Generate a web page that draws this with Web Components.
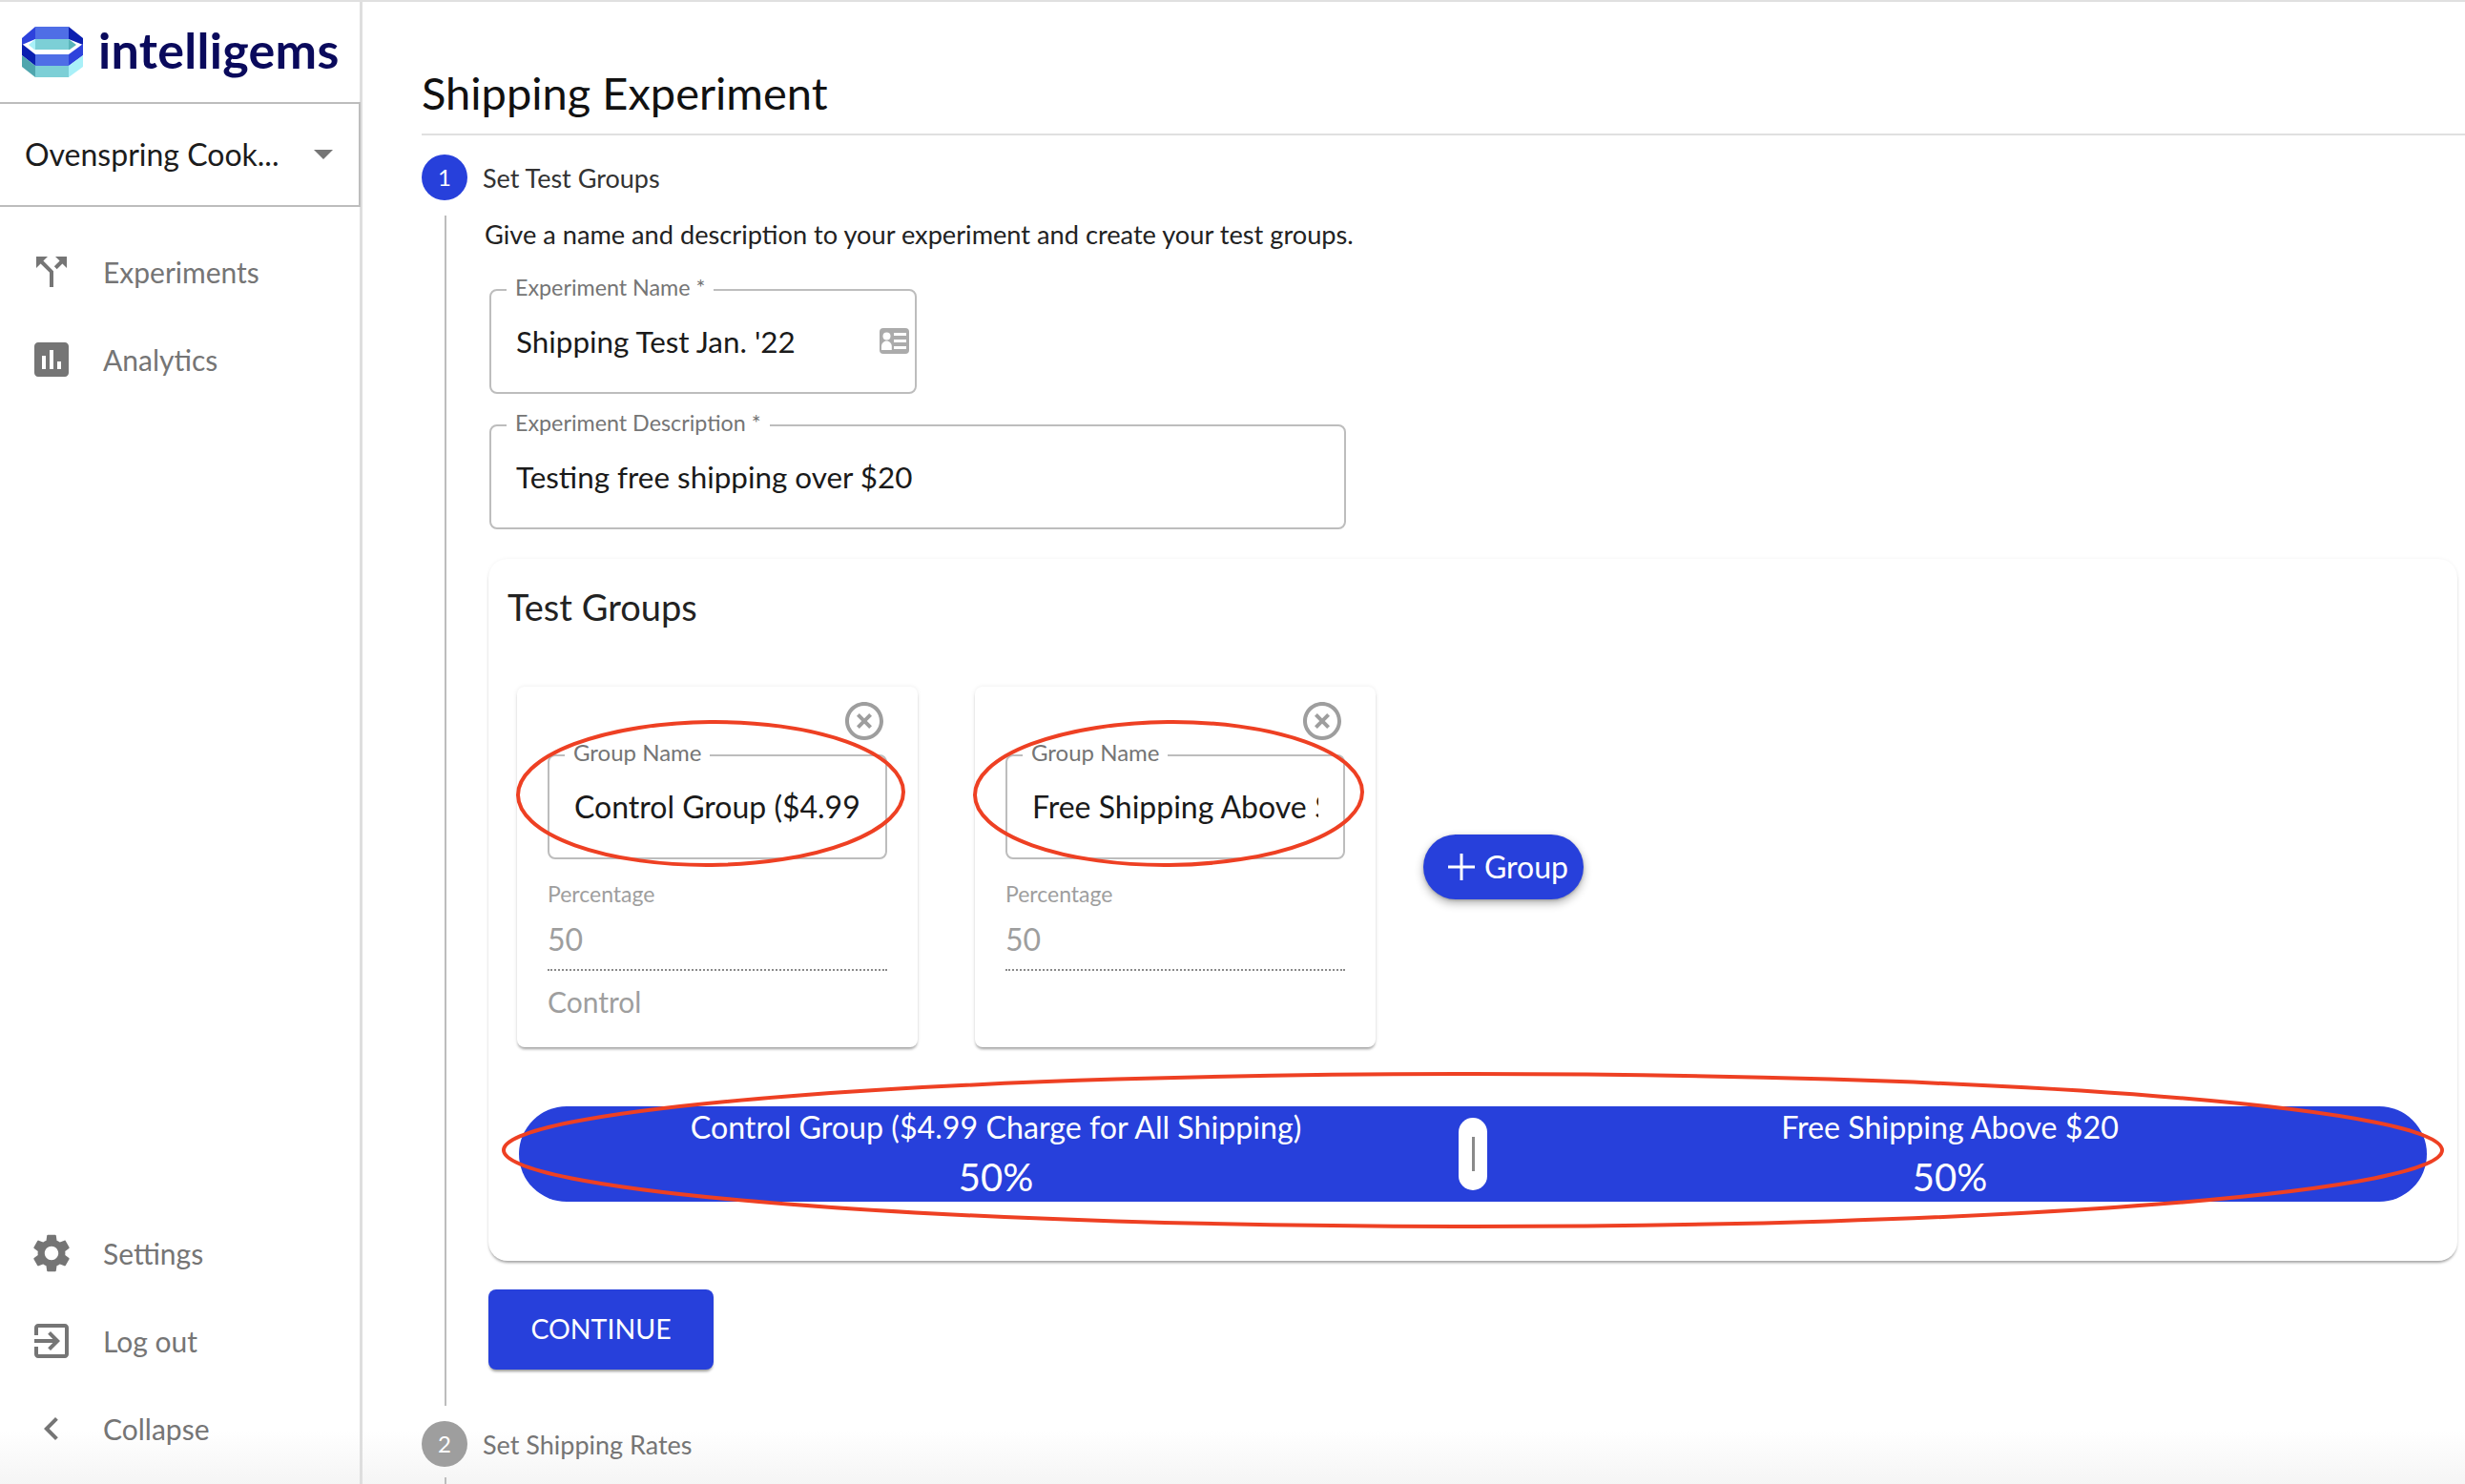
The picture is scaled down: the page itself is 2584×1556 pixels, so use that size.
<!DOCTYPE html>
<html lang="en">
<head>
<meta charset="utf-8">
<title>Shipping Experiment</title>
<style>
  html, body { margin: 0; padding: 0; background: #fff; }
  body { font-family: Lato, "Liberation Sans", sans-serif; color: #1a1a1a; }
</style>
</head>
<body>
<app-shell>
  <side-bar slot="side">
    <nav-item slot="top" label="Experiments" icon="M14 4l2.29 2.29-2.88 2.88 1.42 1.42 2.88-2.88L20 10V4zm-4 0H4v6l2.29-2.29 4.71 4.7V20h2v-8.41l-5.29-5.3z"></nav-item>
    <nav-item slot="top" label="Analytics" icon="M19 3H5c-1.1 0-2 .9-2 2v14c0 1.1.9 2 2 2h14c1.1 0 2-.9 2-2V5c0-1.1-.9-2-2-2zM9 17H7v-7h2v7zm4 0h-2V7h2v10zm4 0h-2v-4h2v4z"></nav-item>
    <nav-item slot="bottom" label="Settings" icon="M19.14 12.94c.04-.3.06-.61.06-.94 0-.32-.02-.64-.07-.94l2.03-1.58c.18-.14.23-.41.12-.61l-1.92-3.32c-.12-.22-.37-.29-.59-.22l-2.39.96c-.5-.38-1.03-.7-1.62-.94l-.36-2.54c-.04-.24-.24-.41-.48-.41h-3.84c-.24 0-.43.17-.47.41l-.36 2.54c-.59.24-1.13.57-1.62.94l-2.39-.96c-.22-.08-.47 0-.59.22L2.74 8.87c-.12.21-.08.47.12.61l2.03 1.58c-.05.3-.09.63-.09.94s.02.64.07.94l-2.03 1.58c-.18.14-.23.41-.12.61l1.92 3.32c.12.22.37.29.59.22l2.39-.96c.5.38 1.03.7 1.62.94l.36 2.54c.05.24.24.41.48.41h3.84c.24 0 .44-.17.47-.41l.36-2.54c.59-.24 1.13-.56 1.62-.94l2.39.96c.22.08.47 0 .59-.22l1.92-3.32c.12-.22.07-.47-.12-.61l-2.01-1.58zM12 15.6c-1.98 0-3.6-1.62-3.6-3.6s1.62-3.6 3.6-3.6 3.6 1.62 3.6 3.6-1.62 3.6-3.6 3.6z"></nav-item>
    <nav-item slot="bottom" label="Log out" icon="M10.09 15.59L11.5 17l5-5-5-5-1.41 1.41L12.67 11H3v2h9.67l-2.58 2.59zM19 3H5c-1.11 0-2 .9-2 2v4h2V5h14v14H5v-4H3v4c0 1.1.89 2 2 2h14c1.1 0 2-.9 2-2V5c0-1.1-.9-2-2-2z"></nav-item>
    <nav-item slot="bottom" label="Collapse" icon="M15.41 7.41L14 6l-6 6 6 6 1.41-1.41L10.83 12z"></nav-item>
  </side-bar>

  <page-title>Shipping Experiment</page-title>
  <step-head number="1" active>Set Test Groups</step-head>
  <step-body>
    <step-text>Give a name and description to your experiment and create your test groups.</step-text>
    <outlined-field label="Experiment Name *" value="Shipping Test Jan. '22" width="448" card></outlined-field>
    <outlined-field label="Experiment Description *" value="Testing free shipping over $20" width="898"></outlined-field>
    <groups-panel heading="Test Groups">
      <group-card name="Control Group ($4.99 Charge for All Shipping)" percent="50" note="Control"></group-card>
      <group-card name="Free Shipping Above $20" percent="50"></group-card>
      <add-button slot="add">Group</add-button>
      <split-bar slot="bar" left="Control Group ($4.99 Charge for All Shipping)" right="Free Shipping Above $20" left-pct="50%" right-pct="50%"></split-bar>
    </groups-panel>
    <continue-button>CONTINUE</continue-button>
  </step-body>
  <step-head number="2">Set Shipping Rates</step-head>
  <step-body tail></step-body>
</app-shell>

<script>
const FONT = 'Lato, "Liberation Sans", sans-serif';
const BLUE = '#2740db';

function make(tag, markup, setup) {
  const template = document.createElement('template');
  template.innerHTML = markup;
  customElements.define(tag, class extends HTMLElement {
    constructor() {
      super();
      this.attachShadow({ mode: 'open' });
      this.shadowRoot.appendChild(template.content.cloneNode(true));
    }
    connectedCallback() {
      if (setup) setup(this, this.shadowRoot);
    }
  });
}

make('app-shell', `
  <style>
    :host {
      display: grid;
      grid-template-columns: 380px 1fr;
      width: 2584px;
      height: 1556px;
      overflow: hidden;
      position: relative;
      box-sizing: border-box;
      border-top: 2px solid #e0e0e0;
      background: #fff;
    }
    main { padding-left: 62px; min-width: 0; position: relative; z-index: 1; }
    .fade {
      position: absolute;
      left: 0; right: 0; bottom: 0;
      height: 56px;
      pointer-events: none;
      background: linear-gradient(rgba(244,244,244,0), rgba(244,244,244,.9));
    }
  </style>
  <div class="fade"></div>
  <slot name="side"></slot>
  <main><slot></slot></main>
`);

make('side-bar', `
  <style>
    :host {
      display: flex;
      flex-direction: column;
      height: 1554px;
      box-sizing: border-box;
      border-right: 3px solid #dedede;
      position: relative;
    }
    .logo {
      height: 105px;
      display: flex;
      align-items: center;
      gap: 15px;
      padding-left: 22px;
      box-sizing: border-box;
    }
    .logo svg { width: 66px; height: 55px; flex: none; }
    .word {
      font: 700 52px/1 ${FONT};
      color: #0a0a5c;
      letter-spacing: .3px;
      margin-top: -6px;
      white-space: nowrap;
    }
    .select {
      height: 110px;
      box-sizing: border-box;
      border: 2px solid #bdbdbd;
      border-left: 0;
      margin-right: -1px;
      display: flex;
      align-items: center;
      justify-content: space-between;
      padding: 0 27px 0 26px;
      font: 400 32px/1 ${FONT};
      color: #1c1c1c;
    }
    .arrow { width: 0; height: 0; border: 10px solid transparent; border-top-color: #757575; border-bottom: 0; }
    .top { padding-top: 22px; display: flex; flex-direction: column; }
    .bottom { margin-top: auto; padding-bottom: 12px; display: flex; flex-direction: column; }
  </style>
  <div class="logo">
    <svg viewBox="22 27 66 55">
      <polygon fill="#4f6ee6" points="37,28 72,28 72,41 37,41"/>
      <polygon fill="#2d42dc" points="37,28 23,40 23,47 37,41"/>
      <polygon fill="#0b1fb0" points="72,28 87,40 87,47 72,41"/>
      <polygon fill="#7ccfd6" points="37,41 72,41 72,52 37,52"/>
      <polygon fill="#a9f0f8" points="37,41 30,47 36,52 37,52"/>
      <polygon fill="#5ab5ba" points="72,41 80,47 73,52 72,52"/>
      <polygon fill="#4f6ee6" points="37,57 72,57 72,69 37,69"/>
      <polygon fill="#0b1fb0" points="23,46 37,57 37,69 23,58"/>
      <polygon fill="#2d42dc" points="87,46 72,57 72,69 87,58"/>
      <polygon fill="#4fa6ae" points="23,58 37,69 37,81 23,70"/>
      <polygon fill="#7ccfd6" points="37,69 72,69 72,81 37,81"/>
      <polygon fill="#a9f0f8" points="72,69 87,58 87,70 72,81"/>
    </svg>
    <span class="word">intelligems</span>
  </div>
  <div class="select"><span>Ovenspring Cook...</span><span class="arrow"></span></div>
  <div class="top"><slot name="top"></slot></div>
  <div class="bottom"><slot name="bottom"></slot></div>
`);

make('nav-item', `
  <style>
    :host {
      display: flex;
      align-items: center;
      height: 92px;
      padding-left: 30px;
      color: #757575;
      font: 400 30px/1 ${FONT};
    }
    svg { width: 48px; height: 48px; fill: #757575; margin-right: 30px; flex: none; }
  </style>
  <svg viewBox="0 0 24 24"><path></path></svg><span></span>
`, (el, root) => {
  root.querySelector('path').setAttribute('d', el.getAttribute('icon'));
  root.querySelector('span').textContent = el.getAttribute('label');
});

make('page-title', `
  <style>
    :host {
      display: flex;
      align-items: center;
      height: 140px;
      padding-top: 52px;
      box-sizing: border-box;
      border-bottom: 2px solid #e0e0e0;
      font: 400 47px/56px ${FONT};
      color: #111;
    }
  </style>
  <slot></slot>
`);

make('step-head', `
  <style>
    :host {
      display: flex;
      align-items: center;
      gap: 16px;
      margin-top: 20px;
      height: 48px;
      font: 400 27px/1 ${FONT};
      color: #333;
    }
    :host(:not([active])) { margin-top: 16px; color: #757575; }
    .dot {
      width: 48px; height: 48px;
      border-radius: 50%;
      background: #9e9e9e;
      color: #fff;
      display: flex;
      align-items: center;
      justify-content: center;
      font-size: 24px;
      flex: none;
    }
    :host([active]) .dot { background: ${BLUE}; }
  </style>
  <span class="dot"></span><span><slot></slot></span>
`, (el, root) => {
  root.querySelector('.dot').textContent = el.getAttribute('number');
});

make('step-body', `
  <style>
    :host {
      display: block;
      margin: 16px 0 0 24px;
      padding: 0 0 38px 40px;
      border-left: 2px solid #bdbdbd;
      width: 2068px;
      box-sizing: content-box;
    }
    :host([tail]) { margin-top: 11px; }
  </style>
  <slot></slot>
`);

make('step-text', `
  <style>
    :host { display: block; font: 400 27.2px/40px ${FONT}; color: #222; height: 42px; white-space: nowrap; }
  </style>
  <slot></slot>
`);

make('outlined-field', `
  <style>
    :host { display: block; margin: 32px 0 0 5px; }
    :host([card]) { margin-top: 35px; }
    fieldset {
      margin: 0;
      padding: 0 26px;
      height: 110px;
      box-sizing: border-box;
      border: 2px solid #bdbdbd;
      border-radius: 8px;
      display: flex;
      align-items: center;
      justify-content: space-between;
      min-width: 0;
    }
    legend {
      padding: 0 9px;
      margin-left: -10px;
      font: 400 23.3px/0 ${FONT};
      color: #757575;
      height: 0;
      transform: translateY(-3px);
    }
    .value { font: 400 31.4px/40px ${FONT}; color: #1a1a1a; white-space: nowrap; margin-top: -1px; }
    svg { width: 31px; height: 27px; margin: -2px -20px 0 0; flex: none; display: none; }
    :host([card]) svg { display: block; }
  </style>
  <fieldset>
    <legend></legend>
    <span class="value"></span>
    <svg viewBox="0 0 31 27">
      <rect width="31" height="27" rx="4" fill="#ababab"/>
      <circle cx="7.5" cy="8.5" r="4" fill="#fff"/>
      <path d="M2 23v-4c0-3 2.5-5.5 5.4-5.5s5.4 2.5 5.4 5.5v4z" fill="#fff"/>
      <path d="M15 5h13v3H15zM15 12h13v3H15zM15 19h13v3H15z" fill="#fff"/>
    </svg>
  </fieldset>
`, (el, root) => {
  root.querySelector('fieldset').style.width = el.getAttribute('width') + 'px';
  root.querySelector('legend').textContent = el.getAttribute('label');
  root.querySelector('.value').textContent = el.getAttribute('value');
});

make('groups-panel', `
  <style>
    :host {
      display: block;
      position: relative;
      margin: 31px 0 0 4px;
      width: 2064px;
      box-sizing: border-box;
      padding: 20px 20px 62px;
      border-radius: 20px;
      background: #fff;
      box-shadow: 0 3px 3px -1px rgba(0,0,0,.35), 0 0 4px rgba(0,0,0,.05);
    }
    h2 { margin: 0; font: 400 38px/60px ${FONT}; color: #222; height: 60px; }
    .row {
      display: flex;
      align-items: center;
      gap: 60px;
      margin: 54px 0 0 10px;
    }
    .bar { margin: 62px 0 0 12px; }
    svg { position: absolute; left: 0; top: 0; overflow: visible; pointer-events: none; }
    ellipse { fill: none; stroke: #ee4023; stroke-width: 4; }
  </style>
  <h2></h2>
  <div class="row"><slot></slot><slot name="add"></slot></div>
  <div class="bar"><slot name="bar"></slot></div>
  <svg width="2064" height="736">
    <ellipse cx="233" cy="246" rx="202" ry="75" transform="rotate(-0.5 233 246)"/>
    <ellipse cx="713" cy="246" rx="203" ry="75" transform="rotate(-0.5 713 246)"/>
    <ellipse cx="1032" cy="620" rx="1016" ry="80"/>
  </svg>
`, (el, root) => {
  root.querySelector('h2').textContent = el.getAttribute('heading');
});

make('group-card', `
  <style>
    :host {
      display: block;
      position: relative;
      flex: none;
      width: 420px;
      height: 378px;
      box-sizing: border-box;
      padding: 71px 32px 0;
      border-radius: 8px;
      background: #fff;
      box-shadow: 0 3px 3px -1px rgba(0,0,0,.35), 0 0 5px rgba(0,0,0,.08);
    }
    .close { position: absolute; top: 12px; right: 32px; width: 48px; height: 48px; fill: #9e9e9e; }
    fieldset {
      margin: 0;
      padding: 0 26px;
      height: 110px;
      box-sizing: border-box;
      border: 2px solid #bdbdbd;
      border-radius: 8px;
      display: flex;
      align-items: center;
      min-width: 0;
    }
    legend { padding: 0 9px; margin-left: -10px; font: 400 24px/0 ${FONT}; color: #757575; height: 0; transform: translateY(-3px); }
    .name { font: 400 32px/40px ${FONT}; color: #1a1a1a; white-space: nowrap; overflow: hidden; width: 100%; margin-top: -1px; }
    .cap { font: 400 23px/30px ${FONT}; color: #9e9e9e; margin-top: 21px; }
    .pct {
      font: 400 32px/40px ${FONT};
      color: #9e9e9e;
      margin-top: 13px;
      padding-bottom: 11px;
      border-bottom: 2px dotted #8a8a8a;
    }
    .note { font: 400 30px/40px ${FONT}; color: #9e9e9e; margin-top: 12px; }
  </style>
  <svg class="close" viewBox="0 0 24 24"><path d="M14.59 8L12 10.59 9.41 8 8 9.41 10.59 12 8 14.59 9.41 16 12 13.41 14.59 16 16 14.59 13.41 12 16 9.41 14.59 8zM12 2C6.47 2 2 6.47 2 12s4.47 10 10 10 10-4.47 10-10S17.53 2 12 2zm0 18c-4.41 0-8-3.59-8-8s3.59-8 8-8 8 3.59 8 8-3.59 8-8 8z"/></svg>
  <fieldset><legend>Group Name</legend><div class="name"></div></fieldset>
  <div class="cap">Percentage</div>
  <div class="pct"></div>
  <div class="note"></div>
`, (el, root) => {
  root.querySelector('.name').textContent = el.getAttribute('name');
  root.querySelector('.pct').textContent = el.getAttribute('percent');
  root.querySelector('.note').textContent = el.getAttribute('note') || '';
});

make('add-button', `
  <style>
    :host {
      display: flex;
      align-items: center;
      gap: 9px;
      margin-left: -10px;
      flex: none;
      width: 168px;
      height: 68px;
      box-sizing: border-box;
      padding-left: 25px;
      border-radius: 34px;
      background: ${BLUE};
      color: #fff;
      font: 400 32px/1 ${FONT};
      box-shadow: 0 4px 10px rgba(0,0,0,.3), 0 1px 3px rgba(0,0,0,.2);
    }
    svg { width: 30px; height: 30px; stroke: #fff; stroke-width: 3; flex: none; }
  </style>
  <svg viewBox="0 0 30 30"><path d="M15 1v28M1 15h28"/></svg><span><slot></slot></span>
`);

make('split-bar', `
  <style>
    :host {
      display: grid;
      grid-template-columns: 1fr 1fr;
      position: relative;
      width: 2000px;
      height: 100px;
      border-radius: 50px;
      background: ${BLUE};
      color: #fff;
      text-align: center;
    }
    .side { padding-top: 2px; }
    .name { font: 400 32.2px/40px ${FONT}; white-space: nowrap; }
    .pct { font: 400 40px/50px ${FONT}; margin-top: 7px; }
    .handle {
      position: absolute;
      left: 985px; top: 12px;
      width: 30px; height: 76px;
      border-radius: 15px;
      background: #fff;
      display: flex;
      align-items: center;
      justify-content: center;
    }
    .handle i { display: block; width: 3px; height: 36px; background: #8a8a8a; }
  </style>
  <div class="side"><div class="name" id="ln"></div><div class="pct" id="lp"></div></div>
  <div class="side"><div class="name" id="rn"></div><div class="pct" id="rp"></div></div>
  <div class="handle"><i></i></div>
`, (el, root) => {
  root.getElementById('ln').textContent = el.getAttribute('left');
  root.getElementById('rn').textContent = el.getAttribute('right');
  root.getElementById('lp').textContent = el.getAttribute('left-pct');
  root.getElementById('rp').textContent = el.getAttribute('right-pct');
});

make('continue-button', `
  <style>
    :host {
      display: flex;
      align-items: center;
      justify-content: center;
      margin: 30px 0 0 4px;
      width: 236px;
      height: 84px;
      box-sizing: border-box;
      padding-bottom: 2px;
      border-radius: 8px;
      background: ${BLUE};
      color: #fff;
      font: 400 28.5px/1 ${FONT};
      box-shadow: 0 3px 3px -1px rgba(0,0,0,.4);
    }
  </style>
  <slot></slot>
`);
</script>
</body>
</html>
